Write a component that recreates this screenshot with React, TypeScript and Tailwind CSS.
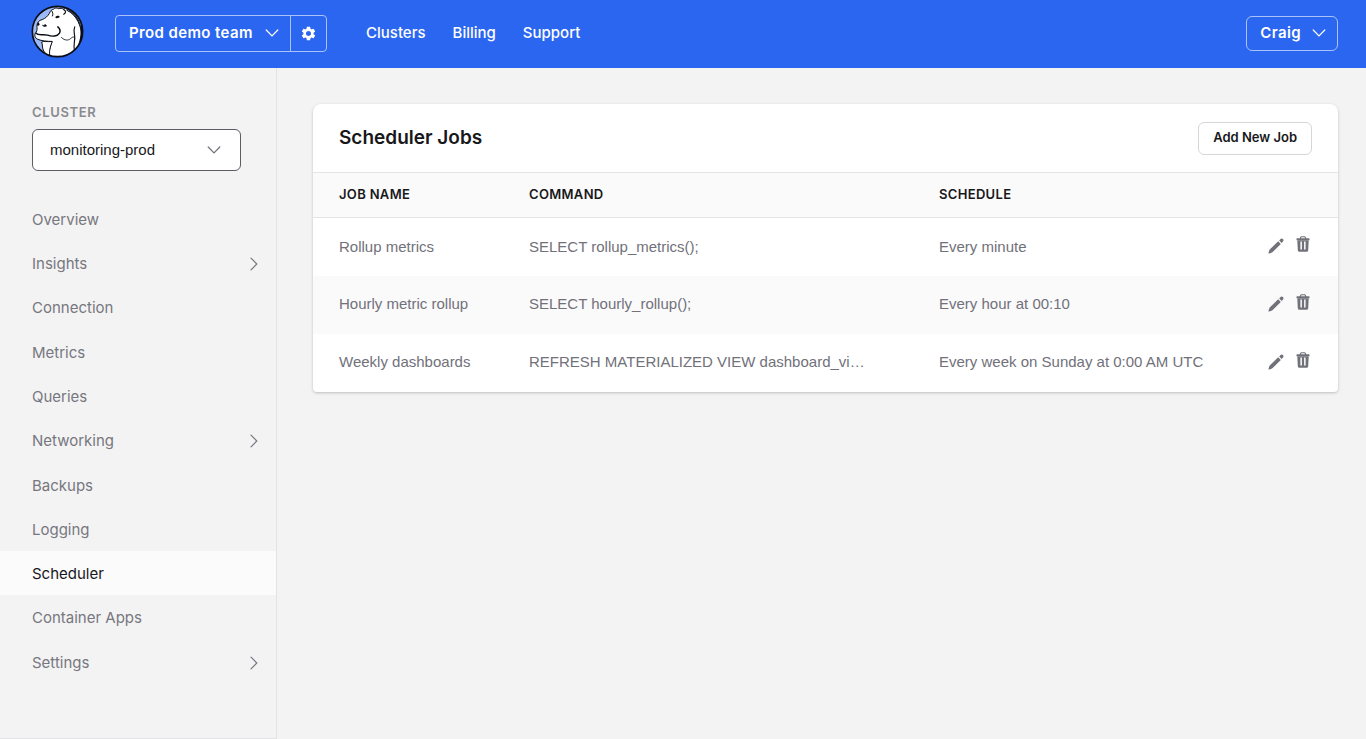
import { MdSettings } from 'react-icons/md';

const navLinks = ['Clusters', 'Billing', 'Support'];

const menu = [
  { label: 'Overview' },
  { label: 'Insights', children: true },
  { label: 'Connection' },
  { label: 'Metrics' },
  { label: 'Queries' },
  { label: 'Networking', children: true },
  { label: 'Backups' },
  { label: 'Logging' },
  { label: 'Scheduler', active: true },
  { label: 'Container Apps' },
  { label: 'Settings', children: true },
];

const jobs = [
  { name: 'Rollup metrics', command: 'SELECT rollup_metrics();', schedule: 'Every minute' },
  { name: 'Hourly metric rollup', command: 'SELECT hourly_rollup();', schedule: 'Every hour at 00:10' },
  {
    name: 'Weekly dashboards',
    command: 'REFRESH MATERIALIZED VIEW dashboard_vi…',
    schedule: 'Every week on Sunday at 0:00 AM UTC',
  },
];

function ChevronDown({ className = '' }: { className?: string }) {
  return (
    <svg viewBox="0 0 14 8" className={`h-2 w-3.5 ${className}`} fill="none" stroke="currentColor" aria-hidden="true">
      <path d="M1.2 1 7 6.8 12.8 1" strokeWidth="1.2" strokeLinecap="round" />
    </svg>
  );
}

function ChevronRight() {
  return (
    <svg viewBox="0 0 8 14" className="h-3.5 w-2" fill="none" stroke="currentColor" aria-hidden="true">
      <path d="M1 1.2 6.8 7 1 12.8" strokeWidth="1.2" strokeLinecap="round" />
    </svg>
  );
}

function PencilIcon() {
  return (
    <svg viewBox="0 0 16 16" className="size-4" fill="currentColor" aria-hidden="true">
      <path d="M.4 15.6Q.6 13 2 11.200L10.200 3.300 12.800 5.900 4.700 13.900Q3 15.300.4 15.600Z" />
      <path d="M11.200 2.400 12.300 1.300C13.200.4 14.200.4 15 1.100 15.700 1.900 15.700 2.900 14.800 3.800L13.700 4.900Z" />
    </svg>
  );
}

function TrashIcon() {
  return (
    <svg viewBox="0 0 14 16" className="h-4 w-3.5" fill="currentColor" aria-hidden="true">
      <path
        d="M3.600 2.300 4.300.9Q4.700.2 5.400.2H8.600Q9.300.2 9.700.9L10.400 2.300H13.100Q13.500 2.300 13.500 2.700V4.300H.5V2.700Q.5 2.300.9 2.300ZM4.900 2.300H9.100L8.500 1.300H5.500Z"
        fillRule="evenodd"
      />
      <path
        d="M1.300 4.300H12.700L12.200 14.200Q12 15.800 10.600 15.800H3.400Q2 15.800 1.800 14.200ZM4.400 5.500V13.500H5.900V5.500ZM8.100 5.500V13.500H9.600V5.500Z"
        fillRule="evenodd"
      />
    </svg>
  );
}

function Logo() {
  return (
    <svg viewBox="34 14 160 160" className="size-[53px]" role="img" aria-label="Home">
      <clipPath id="logo-disc">
        <circle cx="114" cy="94" r="76" />
      </clipPath>
      <g clipPath="url(#logo-disc)">
        <circle cx="114" cy="94" r="76" fill="#9dbaf8" />
        {/* body and head */}
        <path
          d="M92 180C86 160 90 142 98 124C82 124 66 122 55 118C45 113 43 104 49 97C54 89 52 84 52 78C52 67 58 60 68 58C78 54 84 48 89 40C93 31 97 27 102 27C106 22 112 22 117 25C123 23 128 24 133 27C137 20 144 23 142 30C156 36 168 48 176 64C186 86 188 98 184 122L176 180Z"
          fill="#fff"
          stroke="#0a0d14"
          strokeWidth="3"
        />
        {/* far leg */}
        <path
          d="M97 124C84 126 72 122 66 126C70 134 67 142 71 150C76 160 84 168 92 172C87 156 92 140 97 128Z"
          fill="#fff"
          stroke="#0a0d14"
          strokeWidth="3"
        />
        {/* shade along the back */}
        <path d="M138 24C158 36 174 52 182 76C186 96 184 112 176 136L170 160 200 150 206 60 160 10Z" fill="#0a0d14" />
        <path d="M150 28C166 38 180 54 186 78" fill="none" stroke="#9dbaf8" strokeWidth="2.500" />
        <g fill="none" stroke="#0a0d14" strokeLinecap="round">
          <path d="M49 99C58 108 70 101 84 105C98 110 114 109 120 99C124 91 121 85 115 80" strokeWidth="4.500" />
          <path d="M166 80C160 94 167 102 166 114C165 130 162 140 165 152" strokeWidth="3.500" />
          <path d="M166 114C164 106 158 112 150 118C142 122 132 119 126 112" strokeWidth="2.500" />
          <path d="M133 28C140 31 140 38 133 42" strokeWidth="3.500" />
          <path d="M97 32C100 37 101 42 99 47" strokeWidth="3" />
        </g>
        <ellipse cx="114" cy="50" rx="6.500" ry="3.500" fill="#0a0d14" transform="rotate(-14 114 50)" />
        <ellipse cx="56" cy="72" rx="3.500" ry="5" fill="#0a0d14" />
        <path d="M67 73C69 79 77 83 83 77C80 76 79 71 75 71C76 76 71 76 67 73Z" fill="#0a0d14" />
      </g>
      <circle cx="114" cy="94" r="76" fill="none" stroke="#0a0d14" strokeWidth="5" />
    </svg>
  );
}

function Header() {
  return (
    <header className="flex h-[68px] items-center bg-[#2b66f1] pr-7 pb-0.5 pl-[31px] text-white">
      <a href="#" className="-mt-1">
        <Logo />
      </a>

      <div className="ml-[31px] flex h-[37px] rounded border border-[#a9c2fa]">
        <div className="relative flex items-center">
          <select
            aria-label="Team"
            className="h-full w-[174px] appearance-none bg-transparent pl-[13px] text-[15px] font-semibold tracking-wide"
          >
            <option>Prod demo team</option>
          </select>
          <ChevronDown className="pointer-events-none absolute right-[11px]" />
        </div>
        <button type="button" aria-label="Team settings" className="flex w-9 items-center justify-center border-l border-[#a9c2fa]">
          <MdSettings className="size-[17px]" />
        </button>
      </div>

      <nav className="ml-[39px] flex gap-[27px] text-[15px] font-medium">
        {navLinks.map((link) => (
          <a key={link} href="#">
            {link}
          </a>
        ))}
      </nav>

      <button
        type="button"
        aria-haspopup="menu"
        className="ml-auto flex h-[35px] items-center gap-[11px] rounded-md border border-[#a9c2fa] pr-[11px] pl-[13px] text-[15px] font-semibold tracking-wide"
      >
        Craig
        <ChevronDown />
      </button>
    </header>
  );
}

function Sidebar() {
  return (
    <aside className="w-[277px] shrink-0 border-r border-b border-[#e3e3e5] pt-9">
      <div className="px-8">
        <label htmlFor="cluster" className="block text-[13px] leading-4 font-semibold tracking-wider text-[#8a8a8f]">
          CLUSTER
        </label>
        <div className="relative mt-[9px] flex w-[209px] items-center">
          <select
            id="cluster"
            className="h-[42px] w-full appearance-none rounded-md border border-[#5c5c66] bg-white pl-[17px] font-['Liberation_Sans',sans-serif] text-[15px] text-[#18181b]"
          >
            <option>monitoring-prod</option>
          </select>
          <ChevronDown className="pointer-events-none absolute right-5 text-[#71717a]" />
        </div>
      </div>

      <ul className="mt-[26px] grid h-[487px] auto-rows-fr text-[15px]">
        {menu.map((item) => (
          <li key={item.label}>
            <a
              href="#"
              aria-current={item.active ? 'page' : undefined}
              className={`flex h-full items-center justify-between pt-0.5 pr-[18px] pl-8 ${
                item.active ? 'bg-[#fbfbfb] text-[#18181b]' : 'text-[#77777f]'
              }`}
            >
              {item.label}
              {item.children && <ChevronRight />}
            </a>
          </li>
        ))}
      </ul>
    </aside>
  );
}

function JobsCard() {
  return (
    <section className="rounded-t-lg rounded-b-sm bg-white shadow-[0_1px_3px_rgba(0,0,0,0.22)]">
      <div className="flex h-[68px] items-center justify-between px-[26px]">
        <h1 className="text-[19px] font-semibold text-[#18181b]">Scheduler Jobs</h1>
        <button
          type="button"
          className="h-[33px] rounded-md border border-[#d6d6d9] px-[14px] text-[13px] font-semibold text-[#18181b]"
        >
          Add New Job
        </button>
      </div>

      <table className="w-full table-fixed text-left">
        <thead>
          <tr className="h-[45px] border-y border-[#e5e5e7] bg-[#fafafa] text-[13px] tracking-wide text-[#18181b]">
            <th className="w-[190px] pl-[26px] font-semibold">JOB NAME</th>
            <th className="w-2/5 pl-[26px] font-semibold">COMMAND</th>
            <th className="pl-[26px] font-semibold">SCHEDULE</th>
            <th className="w-[84px]" aria-label="Actions" />
          </tr>
        </thead>
        <tbody className="font-['Liberation_Sans',sans-serif] text-[15px] text-[#71717a]">
          {jobs.map((job) => (
            <tr key={job.name} className="h-[58px] even:bg-[#fafafa]">
              <td className="pl-[26px] whitespace-nowrap">{job.name}</td>
              <td className="pl-[26px] whitespace-nowrap">{job.command}</td>
              <td className="pl-[26px] whitespace-nowrap">{job.schedule}</td>
              <td className="pr-7 pb-1">
                <div className="flex items-start justify-end gap-3">
                  <button type="button" aria-label={`Edit ${job.name}`} className="pt-0.5">
                    <PencilIcon />
                  </button>
                  <button type="button" aria-label={`Delete ${job.name}`}>
                    <TrashIcon />
                  </button>
                </div>
              </td>
            </tr>
          ))}
        </tbody>
      </table>
    </section>
  );
}

export default function App() {
  return (
    <div className="flex min-h-screen flex-col bg-[#f3f3f3] font-['Inter',sans-serif]">
      <Header />
      <div className="flex flex-1">
        <Sidebar />
        <main className="min-w-0 flex-1 pt-9 pr-7 pl-9">
          <JobsCard />
        </main>
      </div>
    </div>
  );
}
